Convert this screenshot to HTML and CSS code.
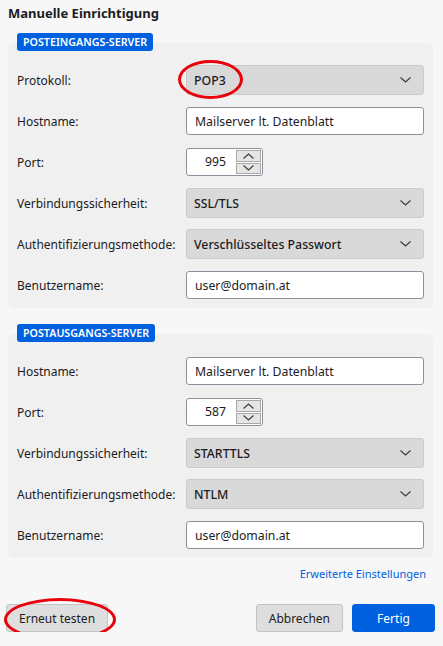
FILE: index.html
```html
<!DOCTYPE html>
<html lang="de">
<head>
    <meta charset="UTF-8">
    <meta name="viewport" content="width=device-width, initial-scale=1.0">
    <title>Manuelle Einrichtigung</title>
    <link rel="stylesheet" href="styles.css">
</head>
<body>

<div class="dialog">
    <h1 class="title">Manuelle Einrichtigung</h1>

    <section class="group">
        <span class="badge">POSTEINGANGS-SERVER</span>
        <div class="panel">
            <div class="row">
                <label>Protokoll:</label>
                <div class="select marked">
                    <span>POP3</span>
                    <svg class="chev" width="11" height="6" viewBox="0 0 11 6"><polyline points="0.5,0.5 5.5,5 10.5,0.5" fill="none" stroke="#3a3a3a" stroke-width="1.1"/></svg>
                    <span class="mark mark-pop"></span>
                </div>
            </div>
            <div class="row">
                <label>Hostname:</label>
                <div class="input">Mailserver lt. Datenblatt</div>
            </div>
            <div class="row">
                <label>Port:</label>
                <div class="spin">
                    <span class="spin-val">995</span>
                    <div class="spin-btns">
                        <span class="spin-btn"><svg width="11" height="6" viewBox="0 0 11 6"><polyline points="0.5,5.5 5.5,1 10.5,5.5" fill="none" stroke="#3a3a3a" stroke-width="1.1"/></svg></span>
                        <span class="spin-btn"><svg width="11" height="6" viewBox="0 0 11 6"><polyline points="0.5,0.5 5.5,5 10.5,0.5" fill="none" stroke="#3a3a3a" stroke-width="1.1"/></svg></span>
                    </div>
                </div>
            </div>
            <div class="row">
                <label>Verbindungssicherheit:</label>
                <div class="select">
                    <span>SSL/TLS</span>
                    <svg class="chev" width="11" height="6" viewBox="0 0 11 6"><polyline points="0.5,0.5 5.5,5 10.5,0.5" fill="none" stroke="#3a3a3a" stroke-width="1.1"/></svg>
                </div>
            </div>
            <div class="row">
                <label>Authentifizierungsmethode:</label>
                <div class="select">
                    <span>Verschlüsseltes Passwort</span>
                    <svg class="chev" width="11" height="6" viewBox="0 0 11 6"><polyline points="0.5,0.5 5.5,5 10.5,0.5" fill="none" stroke="#3a3a3a" stroke-width="1.1"/></svg>
                </div>
            </div>
            <div class="row">
                <label>Benutzername:</label>
                <div class="input">user@domain.at</div>
            </div>
        </div>
    </section>

    <section class="group group-out">
        <span class="badge">POSTAUSGANGS-SERVER</span>
        <div class="panel">
            <div class="row">
                <label>Hostname:</label>
                <div class="input">Mailserver lt. Datenblatt</div>
            </div>
            <div class="row">
                <label>Port:</label>
                <div class="spin">
                    <span class="spin-val">587</span>
                    <div class="spin-btns">
                        <span class="spin-btn"><svg width="11" height="6" viewBox="0 0 11 6"><polyline points="0.5,5.5 5.5,1 10.5,5.5" fill="none" stroke="#3a3a3a" stroke-width="1.1"/></svg></span>
                        <span class="spin-btn"><svg width="11" height="6" viewBox="0 0 11 6"><polyline points="0.5,0.5 5.5,5 10.5,0.5" fill="none" stroke="#3a3a3a" stroke-width="1.1"/></svg></span>
                    </div>
                </div>
            </div>
            <div class="row">
                <label>Verbindungssicherheit:</label>
                <div class="select">
                    <span>STARTTLS</span>
                    <svg class="chev" width="11" height="6" viewBox="0 0 11 6"><polyline points="0.5,0.5 5.5,5 10.5,0.5" fill="none" stroke="#3a3a3a" stroke-width="1.1"/></svg>
                </div>
            </div>
            <div class="row">
                <label>Authentifizierungsmethode:</label>
                <div class="select">
                    <span>NTLM</span>
                    <svg class="chev" width="11" height="6" viewBox="0 0 11 6"><polyline points="0.5,0.5 5.5,5 10.5,0.5" fill="none" stroke="#3a3a3a" stroke-width="1.1"/></svg>
                </div>
            </div>
            <div class="row">
                <label>Benutzername:</label>
                <div class="input">user@domain.at</div>
            </div>
        </div>
    </section>

    <div class="more">
        <a href="#">Erweiterte Einstellungen</a>
    </div>

    <div class="footer">
        <button class="btn marked">Erneut testen<span class="mark mark-retest"></span></button>
        <div class="spacer"></div>
        <button class="btn">Abbrechen</button>
        <button class="btn primary">Fertig</button>
    </div>
</div>

</body>
</html>
```

FILE: styles.css
```css
body {
    margin: 0;
    background-color: #f7f7f7;
    font-family: 'Noto Sans', 'Open Sans', sans-serif;
    font-size: 12px;
    color: #1c1b22;
}

.dialog {
    padding: 3px 10px 0 8px;
}

.title {
    margin: 0;
    font-size: 13px;
    line-height: 20px;
    font-weight: 700;
}

.group {
    margin-top: 10px;
    display: flex;
    flex-direction: column;
    align-items: flex-start;
}

.group-out {
    margin-top: 16px;
}

.badge {
    position: relative;
    z-index: 1;
    margin-left: 9px;
    margin-bottom: -8px;
    height: 18px;
    line-height: 18px;
    padding: 0 6px;
    background-color: #0061e0; /* accent blue */
    color: #ffffff;
    border-radius: 3px;
    font-size: 10.7px;
    font-weight: 600;
}

.panel {
    align-self: stretch;
    background-color: #f0f0f0;
    border-radius: 5px;
    padding: 22px 9px 8px 9px;
    display: flex;
    flex-direction: column;
    gap: 11px;
}

.row {
    display: grid;
    grid-template-columns: 169px 1fr;
    align-items: center;
    height: 30px;
}

.row label {
    font-size: 12px;
}

.select {
    position: relative;
    height: 30px;
    box-sizing: border-box;
    display: flex;
    align-items: center;
    justify-content: space-between;
    padding: 0 12px 0 7px;
    background-color: #d9d9d9;
    border: 1px solid #cbcbcb;
    border-radius: 3px;
    font-size: 12.3px;
    font-weight: 500;
}

.input {
    height: 28px;
    box-sizing: border-box;
    display: flex;
    align-items: center;
    padding: 0 8px;
    background-color: #ffffff;
    border: 1px solid #8f8f9d;
    border-radius: 3px;
    font-size: 12.25px;
}

.spin {
    width: 77px;
    height: 28px;
    box-sizing: border-box;
    display: flex;
    background-color: #ffffff;
    border: 1px solid #8f8f9d;
    border-radius: 3px;
    font-size: 12.25px;
}

.spin-val {
    flex: 1;
    text-align: right;
    padding-right: 9px;
    line-height: 26px;
}

.spin-btns {
    width: 27px;
    display: flex;
    flex-direction: column;
    padding: 1px;
    gap: 1px;
    box-sizing: border-box;
}

.spin-btn {
    flex: 1;
    display: flex;
    align-items: center;
    justify-content: center;
    background-color: #e5e5e5;
    border: 1px solid #a8a8a8;
}

.more {
    margin-top: 8px;
    text-align: right;
    padding-right: 7px;
    line-height: 16px;
}

.more a {
    color: #0061e0;
    text-decoration: none;
    font-size: 11px;
}

.footer {
    margin: 22px -2px 0 -2px;
    display: flex;
    gap: 9px;
}

.spacer {
    flex: 1;
}

.btn {
    position: relative;
    height: 28px;
    padding: 0 12px;
    font-family: inherit;
    font-size: 12px;
    color: #1c1b22;
    background-color: #dedede;
    border: 1px solid #c4c4c4;
    border-radius: 3px;
}

.btn.primary {
    min-width: 83px;
    background-color: #0061e0;
    border-color: #0061e0;
    color: #ffffff;
}

/* red hand-drawn style highlight rings */
.marked {
    position: relative;
}

.mark {
    position: absolute;
    border: 3px solid #e8000b;
    border-radius: 50%;
    pointer-events: none;
}

.mark-pop {
    left: -9px;
    top: -6px;
    width: 59px;
    height: 33px;
}

.mark-retest {
    left: -3px;
    top: -7px;
    width: 106px;
    height: 37px;
}
```
